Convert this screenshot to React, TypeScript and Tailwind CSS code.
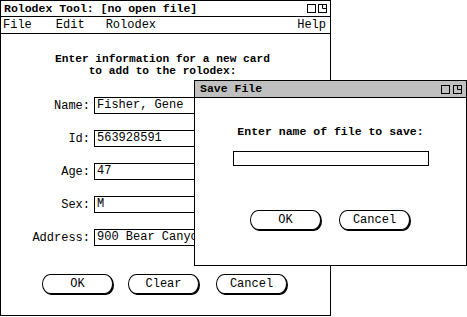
import React from "react";

const mono = { fontFamily: '"Liberation Mono", "DejaVu Sans Mono", monospace' };

function WinIcons({ gap }: { gap: string }) {
  return (
    <div className={`flex items-center ${gap}`}>
      <svg width="9" height="9" viewBox="0 0 9 9" className="block">
        <rect x="0.5" y="0.5" width="8" height="8" fill="none" stroke="#000" strokeWidth="1" />
      </svg>
      <svg width="9" height="9" viewBox="0 0 9 9" className="block">
        <rect x="0.5" y="0.5" width="8" height="8" fill="none" stroke="#000" strokeWidth="1" />
        <path d="M4.5 0.5 V4.5 H8.5" fill="none" stroke="#000" strokeWidth="1" />
      </svg>
    </div>
  );
}

function Btn({ label, className = "" }: { label: string; className?: string }) {
  return (
    <div className={`w-[72px] h-[21px] pr-[1px] pb-[1px] ${className}`}>
      <div className="w-full h-full border border-black rounded-[8px/10px] bg-white shadow-[1px_1px_0_0_#000] flex items-center justify-center text-[12px] leading-none text-black">
        {label}
      </div>
    </div>
  );
}

function Field({ label, value }: { label: string; value: string }) {
  return (
    <div className="flex items-center h-[17px]">
      <div className="w-[89px] text-right text-[12px] leading-none">{label}</div>
      <div className="ml-[4px] w-[220px] h-[17px] border border-black pl-[2px] text-[12px] leading-[15px] whitespace-nowrap overflow-hidden">
        {value}
      </div>
    </div>
  );
}

export default function App() {
  return (
    <div className="relative w-[467px] h-[317px] bg-white text-black overflow-hidden" style={mono}>
      {/* Main window */}
      <div className="w-[331px] h-[316px] border border-black flex flex-col bg-white">
        <div className="h-[16px] border-b border-black flex items-center justify-between pl-[3px] pr-[3px]">
          <span className="text-[11.5px] font-bold leading-none">Rolodex Tool: [no open file]</span>
          <WinIcons gap="gap-[2px]" />
        </div>
        <div className="h-[17px] border-b border-black flex items-center pl-[2px] pr-[4px] text-[12px] leading-none">
          <span>File</span>
          <span className="ml-[24px]">Edit</span>
          <span className="ml-[21px]">Rolodex</span>
          <span className="ml-auto">Help</span>
        </div>
        <div className="flex flex-col pt-[19px]">
          <div className="text-center text-[11.2px] font-bold leading-[12px] pr-[6px]">
            <div>Enter information for a new card</div>
            <div>to add to the rolodex:</div>
          </div>
          <div className="mt-[20px] flex flex-col gap-[16px]">
            <Field label="Name:" value="Fisher, Gene" />
            <Field label="Id:" value="563928591" />
            <Field label="Age:" value="47" />
            <Field label="Sex:" value="M" />
            <Field label="Address:" value="900 Bear Canyon Road" />
          </div>
          <div className="mt-[28px] flex pl-[41px]">
            <Btn label="OK" />
            <Btn label="Clear" className="ml-[14px]" />
            <Btn label="Cancel" className="ml-[16px]" />
          </div>
        </div>
      </div>

      {/* Save File dialog */}
      <div className="absolute left-[194px] top-[80px] w-[273px] h-[186px] border border-black bg-white flex flex-col">
        <div className="h-[17px] bg-[#c0c0c0] border-b border-black flex items-center justify-between pl-[5px] pr-[4px]">
          <span className="text-[11.5px] font-bold leading-none">Save File</span>
          <WinIcons gap="gap-[3px]" />
        </div>
        <div className="flex flex-col pt-[28px]">
          <div className="text-center text-[11.5px] font-bold leading-[12px]">Enter name of file to save:</div>
          <div className="mt-[13px] mx-auto w-[196px] h-[15px] border border-black" />
          <div className="mt-[44px] flex justify-center gap-[17px]">
            <Btn label="OK" />
            <Btn label="Cancel" />
          </div>
        </div>
      </div>
    </div>
  );
}
